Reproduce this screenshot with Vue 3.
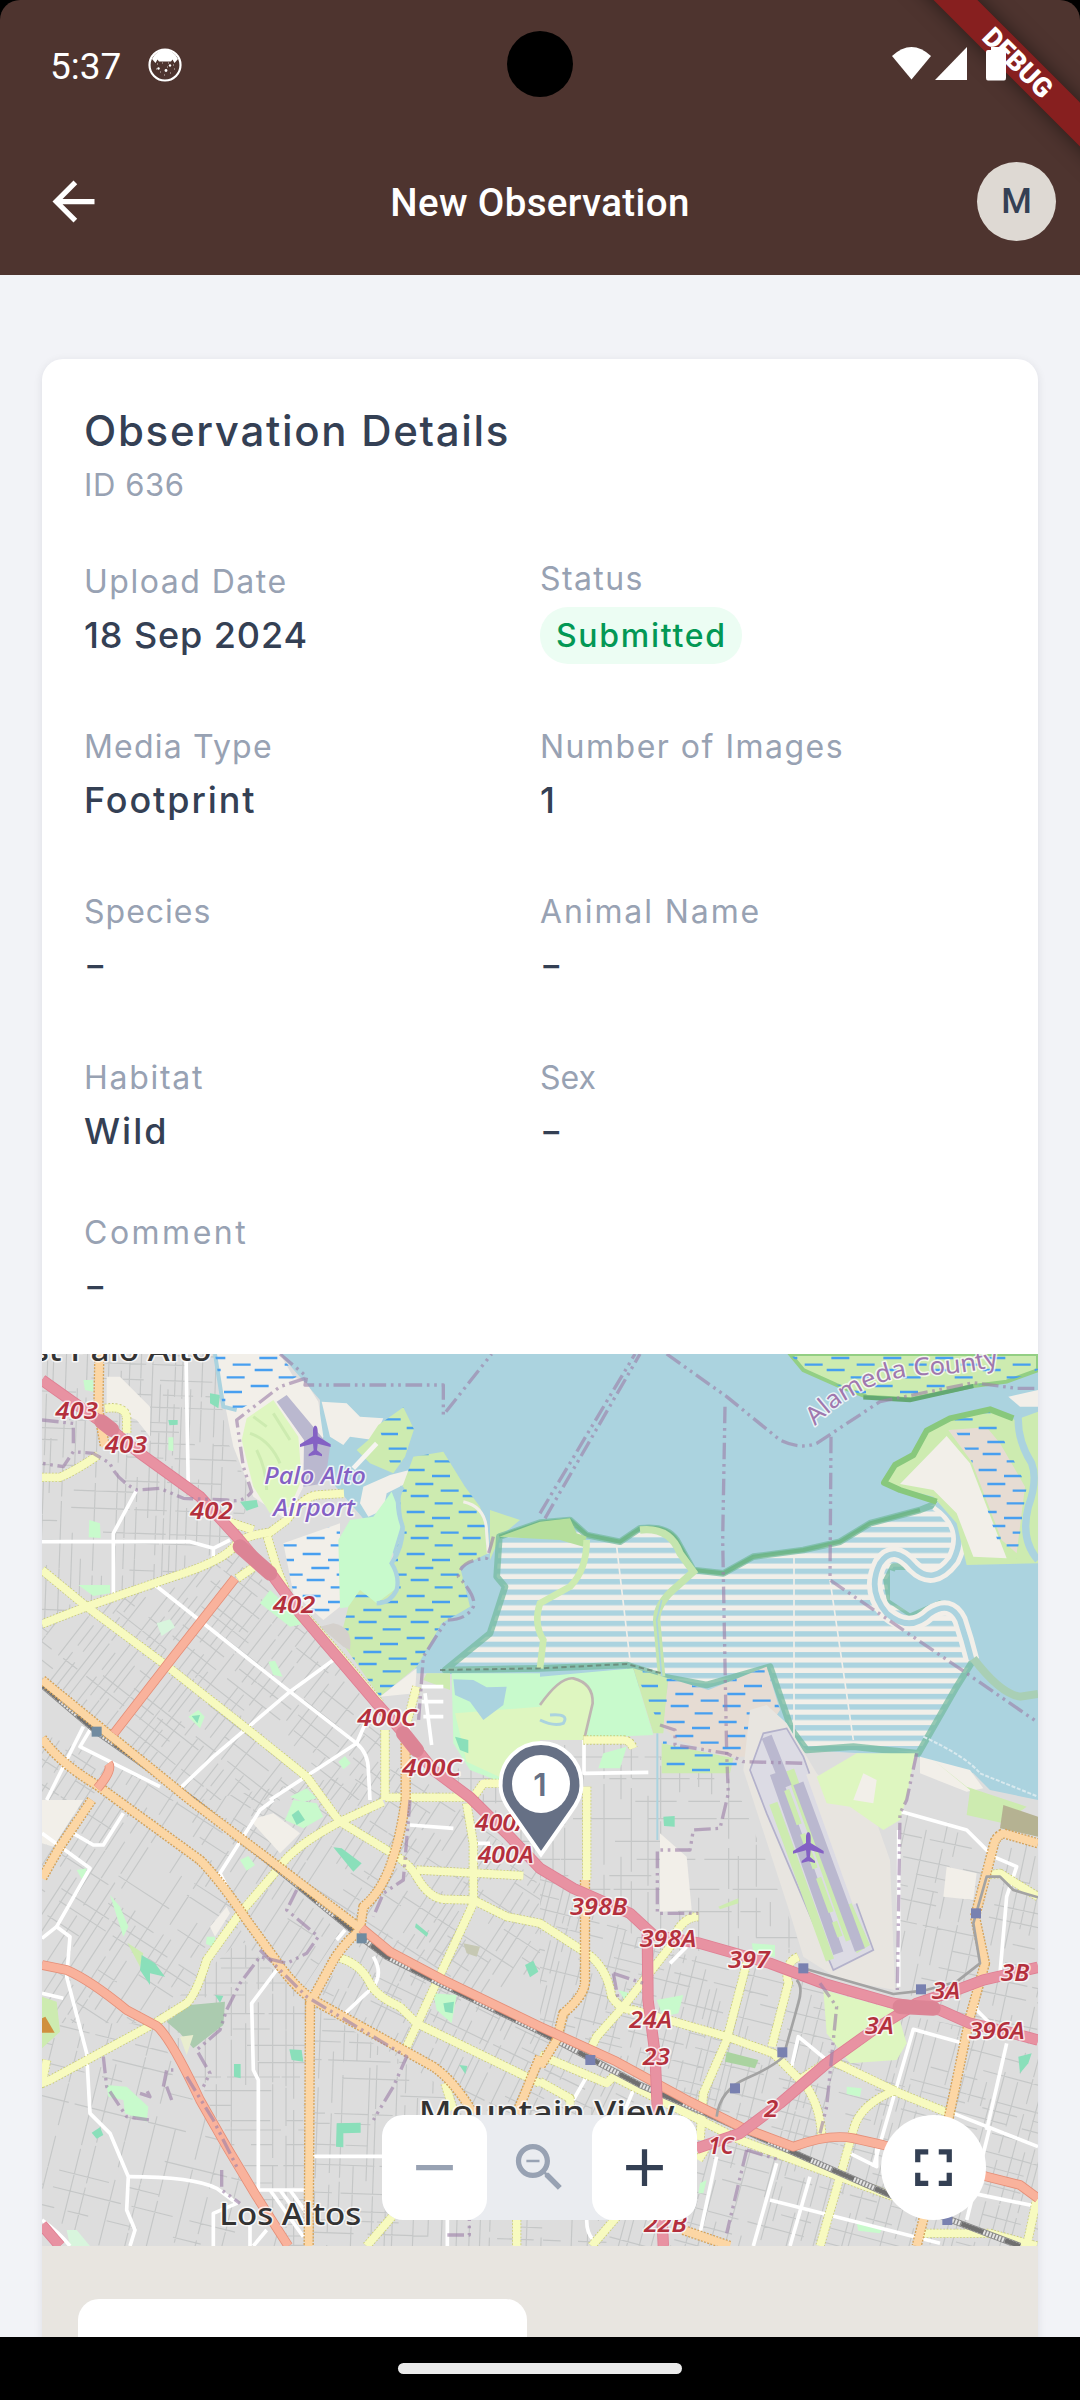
<script setup>
const cells = [
  { label: 'Upload Date', value: '18 Sep 2024', ls: 1.5, vs: 0.9 },
  { label: 'Status', value: 'Submitted', pill: true, ls: 1.4, vs: 1.7 },
  { label: 'Media Type', value: 'Footprint', ls: 1.2, vs: 1.9 },
  { label: 'Number of Images', value: '1', ls: 1.5, vs: 0 },
  { label: 'Species', value: '-', ls: 1, vs: 0 },
  { label: 'Animal Name', value: '-', ls: 1.9, vs: 0 },
  { label: 'Habitat', value: 'Wild', ls: 1.7, vs: 2 },
  { label: 'Sex', value: '-', ls: 0, vs: 0 },
]

// Deterministic street texture: short segments of a rotated grid.
function streets(seed, cx, cy, r, pitch) {
  let s = seed
  const rnd = () => ((s = (s * 16807) % 2147483647) / 2147483647)
  let d = ''
  for (let a = -r; a < r; a += pitch * (0.6 + rnd() * 0.8)) {
    for (let b = -r; b < r;) {
      const len = 60 + rnd() * 220
      if (rnd() > 0.22) d += `M${(cx + a).toFixed(0)} ${(cy + b).toFixed(0)}v${len.toFixed(0)}`
      b += len + rnd() * 40
    }
  }
  for (let a = -r; a < r; a += pitch * (0.8 + rnd() * 1.0)) {
    for (let b = -r; b < r;) {
      const len = 50 + rnd() * 160
      if (rnd() > 0.35) d += `M${(cx + b).toFixed(0)} ${(cy + a).toFixed(0)}h${len.toFixed(0)}`
      b += len + rnd() * 60
    }
  }
  return d
}
const districts = [
  { id: 'd1', clip: '6,42 525,42 560,300 640,470 560,620 380,710 6,860', angle: 2, d: streets(11, 300, 420, 520, 30) },
  { id: 'd2', clip: '6,860 380,710 600,640 760,830 1030,1100 1050,1380 480,1380 6,1020', angle: 38, d: streets(23, 520, 1000, 750, 30) },
  { id: 'd3', clip: '6,1180 480,1380 900,1780 780,1960 600,1800 330,2050 6,2050', angle: 33, d: streets(37, 400, 1650, 700, 36) },
  { id: 'd4', clip: '6,2050 330,2050 640,2560 740,2718 6,2718', angle: 14, d: streets(41, 300, 2400, 560, 60) },
  { id: 'd5', clip: '330,2050 600,1800 810,1990 810,2718 740,2718 500,2280', angle: 0, d: streets(59, 600, 2250, 560, 34) },
  { id: 'd6', clip: '810,1990 1300,2300 1700,2300 1700,2718 810,2718', angle: 2, d: streets(61, 1250, 2350, 560, 36) },
  { id: 'd7', clip: '480,1380 1100,1280 1500,1600 1500,2070 970,1780', angle: 33, d: streets(73, 1050, 1600, 700, 30) },
  { id: 'd8', clip: '820,1980 970,1790 1500,2070 1850,2250 1700,2330 1320,2320', angle: 26, d: streets(79, 1250, 2080, 620, 28) },
  { id: 'd9', clip: '1200,1300 1650,1180 2080,1320 2290,1840 1850,1830 1500,1600', angle: 0, d: streets(83, 1750, 1500, 640, 44) },
  { id: 'd10', clip: '1500,1600 1850,1830 2300,1900 2580,2000 2400,2160 2080,2380 1500,2070', angle: 14, d: streets(97, 2050, 2000, 720, 30) },
  { id: 'd11', clip: '2060,2400 2560,2020 2720,2050 2994,2110 2994,2718 1700,2718 1700,2330', angle: 15, d: streets(101, 2400, 2420, 900, 32) },
  { id: 'd12', clip: '2580,1420 2994,1500 2994,2100 2750,2020 2570,1950', angle: 12, d: streets(113, 2790, 1750, 480, 46) },
]

const parks = [
  ['#c8facc', '130,120 160,120 160,155 135,150'], ['#8adfba', '510,160 540,165 535,205 510,190'],
  ['#8adfba', '385,240 413,240 413,254 388,256'], ['#c8facc', '385,292 400,292 400,334 385,330'],
  ['#c8facc', '148,540 180,550 182,594 146,592'], ['#8adfba', '600,485 650,480 655,500 620,512'],
  ['#c8facc', '115,735 210,735 210,760 160,768'], ['#c8facc', '660,790 690,750 800,850 750,860'],
  ['#d8f5dd', '350,850 390,838 405,862 365,888'], ['#c8facc', '685,965 705,962 728,1010 700,1005'],
  ['#c8facc', '445,1130 475,1110 494,1130 480,1165'], ['#8adfba', '455,1128 480,1125 472,1150'],
  ['#c8facc', '895,1265 915,1248 932,1270 910,1288'], ['#c8facc', '750,1370 800,1345 830,1375 790,1385'],
  ['#c8facc', '735,1440 760,1380 830,1390 850,1430 790,1465'], ['#8adfba', '755,1425 775,1410 795,1440 770,1455'],
  ['#c8facc', '600,1560 625,1548 645,1575 620,1592'], ['#8adfba', '880,1522 905,1525 965,1570 940,1595'],
  ['#c8facc', '110,1590 140,1585 130,1625'], ['#c8facc', '210,1665 240,1700 265,1760 250,1790'],
  ['#cdebb0', '262,1808 310,1840 300,1880'], ['#8adfba', '305,1845 345,1870 375,1910 330,1900 330,1935 300,1890'],
  ['#c8facc', '500,1790 525,1790 525,1822 498,1812'], ['#8adfba', '525,1965 550,1968 540,1988'],
  ['#8adfba', '748,2128 785,2130 790,2165 755,2160'], ['#8adfba', '582,2172 602,2172 602,2215 582,2210'],
  ['#c8facc', '200,2235 260,2240 325,2300 320,2345 255,2320 250,2280 205,2270'],
  ['#8adfba', '155,2378 180,2362 190,2385 170,2396'], ['#c8facc', '1180,1960 1250,1965 1235,2050 1190,2010'],
  ['#8adfba', '1210,1990 1242,1985 1238,2020 1215,2015'], ['#8adfba', '1455,1875 1480,1862 1495,1895 1470,1912'],
  ['#8adfba', '1258,2175 1282,2178 1276,2202'], ['#8adfba', '890,2350 962,2348 962,2378 910,2380 910,2422 888,2420'],
  ['#8adfba', '1128,1750 1165,1780 1160,1790 1125,1762'], ['#c6c8b3', '1270,1810 1320,1820 1310,1850 1280,1840'],
  ['#8adfba', '1870,1430 1904,1428 1904,1460 1872,1458'], ['#c8facc', '1690,1240 1760,1220 1740,1285 1675,1285'],
  ['#c8facc', '2135,1810 2205,1815 2205,1852 2140,1835'], ['#c8facc', '1850,1980 1930,1965 1915,2020 1870,2030'],
  ['#c8facc', '1735,1950 1770,1960 1760,1990'], ['#aad3a0', '2060,2135 2155,2160 2145,2185 2055,2165'],
  ['#c8facc', '2420,2240 2465,2245 2460,2270 2420,2262'], ['#c8facc', '2450,2650 2530,2660 2520,2680 2455,2672'],
  ['#8adfba', '2935,2150 2975,2140 2965,2170 2940,2200'], ['#cdebb0', '2035,1700 2095,1675 2095,1690 2040,1708'],
  ['#c8facc', '1980,2530 2000,2520 1990,2560 1975,2560'], ['#d8f5dd', '80,2670 110,2670 150,2718 90,2718'],
  ['#c6c8b3', '2480,1600 2515,1590 2540,1620 2500,1660 2490,1625'], ['#f2efe9', '2720,1580 2810,1600 2800,1680 2710,1670'],
  ['#f2efe9', '6,1380 130,1380 40,1520 6,1510'], ['#f2efe9', '630,1440 700,1420 780,1480 720,1540'],
  ['#f2efe9', '1860,1480 1940,1550 1955,1710 1860,1715'], ['#f2efe9', '200,110 240,110 330,200 330,290 290,240 200,200'],
  ['#f2efe9', '510,1760 560,1700 570,1720 525,1790'],
]

const primary = [
  'M178 42L175 210L195 320', 'M6 1195Q60 1270 170 1335L480 1560Q540 1620 620 1740L700 1850Q760 1940 820 1980L1180 2180Q1240 2220 1300 2320',
  'M155 1380L60 1520L6 1615', 'M1097 1190V1380Q1080 1500 1050 1580Q1020 1660 970 1700L960 1770Q900 1820 870 1880L810 1990L806 2718',
  'M6 1020L190 1170L450 1380L960 1765', 'M1500 2150L1430 2320',
  'M1635 1620V1930Q1630 1970 1570 2020L1550 2100L1500 2180', 'M2994 1510L2890 1480Q2865 1490 2860 1520L2805 1730L2835 1870L2790 2030L2725 2340L2630 2718', 'M1930 2670L2070 2718',
]
const secondary = [
  'M6 852L140 800L400 710Q560 660 590 610Q620 585 690 577L740 540Q790 470 830 465L912 460', 'M682 590L712 690L745 770L885 930L1020 1090',
  'M6 690L140 800L370 970L600 1150L800 1310L880 1420L900 1445L1040 1530Q1110 1570 1130 1610Q1170 1680 1220 1678L1300 1680L1400 1730L1500 1750L1640 1840Q1700 1880 1715 1970Q1740 2010 1780 2010L2060 2090L2200 2140L2300 2240Q2345 2310 2345 2400',
  'M195 205Q262 195 260 240V280', 'M6 412H60Q110 390 175 345', 'M592 715L640 682', 'M1035 1170V1380', 'M550 540L640 570', 'M1036 1372L1300 1372L1330 1330H1380',
  'M20 2160L6 2230L30 2220L340 2052L440 1990Q470 1960 500 1860L600 1720L720 1580Q760 1520 900 1445L1030 1385',
  'M1280 1390L1300 1510V1690L1100 2120', 'M1130 1590L1450 1607', 'M900 1855Q960 1870 990 1930Q1010 1970 1080 2000L1130 2050L1500 2230',
  'M1640 1340V1620', 'M1630 1200H1750Q1770 1200 1780 1225', 'M1975 1730Q1920 1730 1890 1820L1750 2000L1670 2090L1650 2130',
  'M2120 1870L2060 2100L1990 2260L1980 2400', 'M2275 1850Q2230 1870 2245 1930L2195 2120', 'M2270 2225L2370 2160L2580 2260L2740 2325',
  'M2570 2250Q2460 2290 2440 2370L2400 2510L2340 2718', 'M1500 2145L1700 2230L1720 2210L1920 2310L2100 2400L2560 2570', 'M1500 2225L1590 2275V2300', 'M2840 1605L2880 1600L2994 1670',
  'M1655 2718L1735 2625', 'M980 2718L1065 2620', 'M1430 2640V2718', 'M2640 2680H2850L2990 2718', 'M2994 2560L2960 2718', 'M1100 1150L1130 1040', 'M1215 2230L1240 2310', 'M2000 2420L1975 2460',
]
const tertiary = [
  'M438 42L445 450', 'M290 450L220 580V760', 'M6 605H450L520 625L570 600M520 625V650', 'M345 735L750 1055L950 1210Q985 1240 985 1290L990 1380',
  'M420 1345L520 1250L750 1055L880 960', 'M690 1380L950 1210L985 1130', 'M130 1160L20 1380', 'M150 1170L120 1220L360 1340',
  'M6 1480L150 1585L50 1760L90 1790L80 1910L140 2140L150 2320L210 2380L265 2510L260 2610L285 2670L270 2718', 'M265 2510Q460 2510 530 2545L590 2590L520 2620V2718',
  'M710 1890L635 1990L640 2190L655 2220V2550H800', 'M820 2449H1030', 'M250 1420L190 1515H160L100 1480', 'M700 1380L660 1410L540 1600L560 1640', 'M915 1770L890 1800', 'M1000 1850Q1030 1900 1000 1940L915 2020',
  'M1632 1200V1300L1825 1297', 'M1110 1455L1240 1465', 'M1300 1510H1350', 'M1145 1040H1210M1145 1085H1210M1150 1130H1210M1155 1060L1175 1215', 'M1100 1150Q1110 1200 1150 1235',
  'M2585 1415L2780 1470Q2830 1520 2860 1550L2930 1580L2900 1670L2880 1900', 'M2500 2480L2620 2068L2770 2110', 'M2740 2320L2994 2420', 'M2850 2360L2780 2640', 'M2140 2718L2210 2470', 'M1980 2680L2030 2450',
  'M2250 2718L2310 2510', 'M2190 2580L2700 2710', 'M2250 2200L2275 2090L2360 2160', 'M2900 2110L2840 2370', 'M2430 2440L2510 2480V2400', 'M1890 1870L1940 1820', 'M1600 2280L1640 2210', 'M1640 2640Q1640 2680 1660 2700',
  'M1222 2640V2718', 'M630 2718V2640', 'M640 2718L680 2670', 'M6 1960L70 1975', 'M6 1795L50 1760', 'M6 2640Q60 2680 90 2718', 'M2800 2560L2994 2600', 'M2810 1930V2010L2870 2070',
  'M1755 2310L1780 2250', 'M690 2550L790 2690M720 2550L800 2660M750 2550L800 2620', 'M2576 1470V1940',
]
const motorway = [
  'M6 120L190 250L300 340L480 470L590 590L640 650L700 710L780 820L1010 1090L1100 1190L1180 1290L1290 1372L1400 1480L1500 1585L1600 1645L1770 1720L1840 1785L1980 1810L2190 1870L2350 1930L2560 1990L2700 2010L2790 2050L2900 2075L2994 2100',
  'M1970 2425L2100 2380L2220 2290L2360 2170L2500 2070L2630 1990L2750 1950L2830 1920L2994 1882', 'M1822 1780L1824 1980L1845 2140L1855 2380L1870 2718', 'M6 2655L60 2718',
]
const trunk = [
  'M585 715L400 950L222 1180', 'M205 1270Q220 1290 172 1345', 'M6 1875L80 1890Q150 1920 260 2010L350 2058Q390 2090 480 2280L560 2420L650 2570L745 2718',
  'M965 1765L1050 1835L1200 1915L1500 2060L1730 2165L1950 2285L2100 2360L2260 2420Q2370 2380 2440 2395L2530 2415L2840 2510L2940 2535L2994 2575',
]
const rail = ['M6 1035L170 1175L460 1380L960 1790L1040 1850L1200 1930L1500 2075L1800 2235L2020 2330L2300 2455L2550 2565L2720 2635L2940 2718']
const tram = ['M2290 1885L2560 1962L2650 1952L2750 1925L2820 1870L2800 1750L2840 1610L2880 1610L2920 1650L2994 1672', 'M2270 1920Q2290 1940 2275 1990L2230 2150Q2200 2180 2120 2215Q2040 2250 2030 2330']
const borders = [
  'M720 42L800 110L795 135H1210V225L1355 42', 'M1515 535L1800 42', 'M1500 520L1785 42', 'M1880 42L2060 170L2220 300Q2280 330 2330 310L2520 185L2800 128L2930 145H2994',
  'M2055 200L2048 600L2060 1240L2065 1360L2040 1465L1960 1470L1950 1530H1852V1720H1975', 'M2373 290L2370 720L2780 1000L2990 1145', 'M2630 1240L2600 1380L2580 1420L2572 1950',
  'M795 115L720 140L590 240L610 380L635 455Q610 490 560 480L430 475L360 445L290 450Q230 420 210 370L160 340L100 335L70 380L6 370',
  'M1860 1155L1905 1170V1215L2060 1240L2110 1265L2300 1270', 'M1110 1380L1090 1620L1030 1660L1000 1730', 'M770 1650L740 1710L800 1760L835 1790L800 1840L740 1870L660 1850L600 1930L560 2010L540 2070L470 2130L510 2200L490 2240',
  'M660 1830L800 1970L1100 2150L1060 2240L1000 2340', 'M190 2150L200 2240L260 2330L330 2340', 'M440 2210L520 2340L590 2480', 'M370 2240L380 2190H400M380 2240L395 2280M300 2260L330 2270L320 2250', 'M545 2490V2550L600 2590', 'M1720 1900L1810 1930M1720 1900L1735 1980', 'M2340 1930L2390 2000L2360 2300L2340 2380', 'M2120 2430L2060 2680', 'M6 240L100 250V310', 'M2120 2430L2220 2460', 'M1222 2685H1288V2640',
  'M1360 590Q1350 630 1340 655Q1260 660 1255 710Q1310 770 1300 800Q1280 840 1220 840L1150 950L1135 1150',
]
const stations = [[170, 1175, '#718ba0'], [965, 1795, '#718ba0'], [1651, 2160], [2290, 1885], [2227, 2137], [2085, 2245], [2643, 1948], [2808, 1720], [2722, 2640]]
const exits = [
  ['403', 46, 236, 128], ['403', 194, 338, 128], ['402', 450, 537, 128], ['402', 698, 818, 128], ['400C', 952, 1158, 178], ['400C', 1086, 1308, 178],
  ['400A', 1305, 1474, 168], ['400A', 1313, 1568, 168], ['398B', 1590, 1726, 172], ['398A', 1799, 1820, 170], ['397', 2064, 1885, 126], ['24A', 1768, 2064, 128],
  ['23', 1808, 2175, 82], ['2', 2173, 2330, 42], ['1C', 2005, 2442, 76], ['22B', 1812, 2676, 128], ['3A', 2675, 1978, 86], ['3A', 2475, 2083, 86], ['3B', 2882, 1923, 86], ['396A', 2786, 2096, 168],
]
const plane = 'M0-46C5-46 7-38 7-30V-14L46 10V18L7 8L5 28L20 40V46L0 41L-20 46V40L-5 28L-7 8L-46 18V10L-7-14V-30C-7-38-5-46 0-46Z'
</script>

<template>
  <div class="screen">
    <header class="top">
      <div class="status-bar">
        <span class="clock">5:37</span>
        <svg class="face" viewBox="0 0 34 34"><circle cx="17" cy="17" r="15.500" fill="none" stroke="#fff" stroke-width="2.200" /><path d="M4 11Q9 1.500 17 1.500Q25 1.500 30 11L26.500 15L24.500 11.500L23 13.500L11 13.500L9.500 11.500L7.500 15Z" fill="#fff" /><path d="M9 16h1M14 15h1M20 15h1M25 17h1M8 21h1M12 24h1M22 25h1M26 21h1M16 27h1M19 19h1" stroke="#c9bcb9" stroke-width="1" /><circle cx="10.500" cy="20.500" r="1.200" fill="#fff" /><circle cx="22" cy="17.500" r="1.200" fill="#fff" /><circle cx="18" cy="22.500" r="1.400" fill="#fff" /></svg>
        <span class="camera"></span>
        <svg class="signals" viewBox="0 0 120 36"><path d="M0 10Q19.500-8 39 10L19.500 33.500Z" fill="#fff" /><path d="M43 34L75 1V34Z" fill="#fff" /><path d="M99 1H109V4H112Q114 4 114 6V32Q114 34.500 112 34.500H96Q94 34.500 94 32V6Q94 4 96 4H99Z" fill="#fff" /></svg>
      </div>
      <div class="app-bar">
        <svg class="back" viewBox="0 0 24 24"><path d="M20 11H7.830l5.590-5.590L12 4l-8 8 8 8 1.410-1.410L7.830 13H20v-2z" fill="#fff" /></svg>
        <h1>New Observation</h1>
        <span class="avatar">M</span>
      </div>
      <div class="banner">DEBUG</div>
    </header>

    <main>
      <section class="card">
        <div class="details">
          <h2>Observation Details</h2>
          <p class="id">ID 636</p>
          <div class="grid">
            <div v-for="c in cells" :key="c.label" class="cell" :class="{ status: c.pill }">
              <span class="label" :style="{ letterSpacing: c.ls + 'px' }">{{ c.label }}</span>
              <span :class="c.pill ? 'pill' : c.value === '-' ? 'value dash' : 'value'" :style="{ letterSpacing: c.vs + 'px' }">{{ c.value }}</span>
            </div>
          </div>
          <div class="cell comment">
            <span class="label">Comment</span>
            <span class="value dash">-</span>
          </div>
        </div>

        <div class="map">
          <svg class="tiles" viewBox="6 42 2988 2676" preserveAspectRatio="none">
            <defs>
              <pattern id="marsh" width="156" height="126" patternUnits="userSpaceOnUse"><path d="M8 12h54M84 30h54M34 54h54M110 74h46M0 74h8M20 90h54M92 112h54" stroke="#479ff0" stroke-width="7" /></pattern>
              <pattern id="pond" width="100" height="31.300" patternUnits="userSpaceOnUse" y="592"><rect width="100" height="31.300" fill="#f2efe9" /><rect width="100" height="16" fill="#abd3df" /></pattern>
              <clipPath v-for="d in districts" :id="d.id" :key="d.id"><polygon :points="d.clip" /></clipPath>
              <path id="county" d="M2325 258C2420 160 2530 112 2640 106C2730 102 2800 98 2910 66" />
            </defs>
            <rect x="6" y="42" width="2988" height="2676" fill="#dddddd" />
            <g v-for="d in districts" :key="d.id" :clip-path="`url(#${d.id})`">
              <path :d="d.d" :transform="`rotate(${d.angle} ${d.clip.split(' ')[1].replace(',', ' ')})`" stroke="#c5c7c7" stroke-width="3.500" fill="none" />
            </g>
            <polygon v-for="(p, i) in parks" :key="i" :fill="p[0]" :points="p[1]" />

            <!-- bay and shoreline -->
            <path d="M720 42H2994V1380L2850 1350L2800 1300L2630 1250L2300 1230L2100 1050L1900 1050L1200 1000L1130 1000L1070 760L1060 640L870 420L840 300V180Z" fill="#abd3df" />
            <path d="M525 42H720L760 110L800 130L835 185L850 290L790 440L740 540L640 470L580 320Z" fill="#f2efe9" />
            <path d="M525 42L550 200L590 210" stroke="#abd3df" stroke-width="12" fill="none" />
            <path d="M525 42H720L770 110L700 150L580 220L550 210Z" fill="url(#marsh)" />
            <path d="M845 185L920 190L960 230L1030 235L1000 300L930 290L910 315L870 290Z" fill="#f2efe9" />
            <path d="M700 180L620 235L605 300L640 440L690 520L750 500L785 420L775 290Z" fill="#def6c0" />
            <path d="M640 230l40 30M630 280q60 20 90 90M650 330q30 60 30 120M700 220l50 80" stroke="#cdebb0" stroke-width="9" fill="none" />
            <path d="M710 185L740 165L870 320L855 430L790 440L792 300Z" fill="#bab8cf" />
            <path d="M730 610L900 550V800L850 840L760 760Z" fill="#f2efe9" />
            <path d="M730 610L900 550V800L850 840L760 760Z" fill="url(#marsh)" />
            <path d="M970 440L1050 405L1108 390L1100 430L1040 460L1030 510L985 530L960 490Z" fill="#f2efe9" />
            <path d="M930 540L1000 530L1055 455L1088 540L1050 665L1075 730L1040 785L900 805L895 600Z" fill="#c8facc" />
            <path d="M1015 255L1090 202L1122 268L1095 350L1060 400L990 370L950 330L985 300Z" fill="#cdebb0" />
            <path d="M1015 255L1090 202L1122 268L1095 350L1060 400Z" fill="url(#marsh)" />
            <path d="M1120 350L1210 335L1275 440L1320 500L1345 580V640L1260 680L1290 800L1205 850L1130 980L1020 1070L900 900L925 800L960 750L1010 790L1075 740L1060 660L1088 570L1080 460Z" fill="#cdebb0" />
            <path d="M1120 350L1210 335L1275 440L1320 500L1345 580V640L1260 680L1290 800L1205 850L1130 980L1020 1070L900 900L925 800L960 750L1010 790L1075 740L1060 660L1088 570L1080 460Z" fill="url(#marsh)" />
            <path d="M1088 440Q1060 480 1088 560Q1090 620 1055 670Q1080 710 1070 750Q1050 790 1010 790" stroke="#abd3df" stroke-width="13" fill="none" />
            <path d="M1270 485Q1340 500 1340 580L1345 640" stroke="#f2efe9" stroke-width="9" fill="none" />
            <path d="M1350 510L1440 540L1380 590L1350 660Z" fill="#cdebb0" />
            <path d="M880 850Q940 860 930 930L910 920L840 860Z" fill="#d4d0cc" />
            <path d="M1020 1070L1130 985L1125 1060Z" fill="#f2efe9" />
            <path d="M1010 310L940 385" stroke="#f6f4f0" stroke-width="14" />

            <!-- salt ponds -->
            <path d="M1378 590L1500 548L1590 540L1640 585L1740 605L1800 565Q1880 555 1910 600L1960 690L2050 700L2140 650L2290 630L2400 605L2490 550L2640 510L2690 490Q2760 530 2760 620Q2740 700 2670 710L2620 680L2560 680L2540 720L2550 780L2610 820L2700 785L2780 830L2800 960L2750 1040L2635 1240L2440 1220L2300 1230L2255 1170L2190 980L2000 1035L1870 1010L1760 975L1500 985L1215 990L1350 880L1395 740L1370 710Z" fill="url(#pond)" stroke="#76bba0" stroke-opacity=".75" stroke-width="20" stroke-linejoin="round" />
            <path d="M1378 590L1500 548L1590 540L1640 585L1740 605L1800 565Q1880 555 1910 600L1960 690L2050 700L2140 650L2290 630L2400 605L2490 550L2640 510" stroke="#64b078" stroke-opacity=".65" stroke-width="12" fill="none" />
            <path d="M1378 590L1500 545L1590 535L1610 580L1640 590L1630 620L1560 600Z" fill="#b5df9c" />
            <path d="M1640 600Q1640 690 1590 740L1500 790Q1480 850 1510 900L1500 985" stroke="#cdebb0" stroke-width="20" fill="none" />
            <path d="M1800 570Q1890 560 1920 640L1960 695L1910 740Q1850 790 1850 840L1865 1010" stroke="#c4e5ae" stroke-width="22" fill="none" />
            <path d="M1865 780L1850 840L1865 1010" stroke="#abd3df" stroke-width="5" fill="none" />
            <path d="M1730 620L1770 960M2262 650V1200M2370 720L2440 1200" stroke="#f2efe9" stroke-width="5" fill="none" />
            <path d="M2550 690L2650 725L2790 680L2994 670V1060L2920 1050L2800 950L2770 820L2700 780L2610 820L2550 780Z" fill="#abd3df" />
            <g fill="none" stroke-linejoin="round">
              <path d="M2690 490Q2790 560 2740 660Q2680 740 2620 680Q2560 610 2520 670Q2480 750 2540 820Q2610 880 2670 820Q2730 780 2760 840Q2780 900 2795 960" stroke="#f2efe9" stroke-width="46" />
              <path d="M2690 490Q2790 560 2740 660Q2680 740 2620 680Q2560 610 2520 670Q2480 750 2540 820Q2610 880 2670 820Q2730 780 2760 840Q2780 900 2795 960" stroke="#abd3df" stroke-width="17" />
            </g>
            <path d="M2800 955Q2880 1060 2940 1070L2994 1062" stroke="#a9cfb5" stroke-width="24" fill="none" />
            <path d="M2650 1190Q2780 1250 2820 1300L2994 1370" stroke="#d8e9ee" stroke-width="6" stroke-dasharray="12 5" fill="none" />

            <!-- eastern islands -->
            <path d="M2250 42L2290 90L2390 135L2480 170L2610 178L2800 138L2900 125L2994 90V42Z" fill="#cdebb0" stroke="#93cf84" stroke-width="12" />
            <path d="M2250 42L2290 90L2390 135L2480 170L2610 178L2800 138L2900 125L2994 90V42Z" fill="url(#marsh)" />
            <path d="M2470 172L2610 180L2800 138" stroke="#63a873" stroke-width="13" fill="none" />
            <path d="M2580 445L2532 428L2565 375L2620 345L2660 272L2730 235L2850 210L2925 240L2994 215V670L2780 675L2750 550L2680 470Z" fill="#cdebb0" />
            <path d="M2580 432L2720 288L2790 370L2900 655L2800 650L2750 520L2680 450Z" fill="#f2efe9" />
            <path d="M2725 270L2840 262L2880 310L2955 440L2930 640L2885 600L2795 365Z" fill="#e6dcd3" />
            <path d="M2730 240L2850 215L2960 440L2930 655L2885 640L2795 365Z" fill="url(#marsh)" />
            <path d="M2935 220Q2930 300 2975 370Q2994 420 2965 500Q2940 600 2994 660" stroke="#abd3df" stroke-width="22" fill="none" />
            <path d="M2905 170L2994 150V200H2940Z" fill="#f2efe9" />
            <path d="M2690 485L2580 450L2532 428L2565 375L2620 345L2660 272L2730 235L2850 208L2920 235" stroke="#88c87c" stroke-width="18" stroke-linejoin="round" fill="none" />

            <!-- shoreline park and golf links -->
            <path d="M1235 1000H1500V1330L1380 1325L1290 1290L1240 1210Z" fill="#c8facc" />
            <path d="M1245 1120L1500 1100V1290L1380 1312L1280 1265Z" fill="#def6c0" />
            <path d="M1240 1018L1300 1020L1340 1042L1400 1040L1390 1095L1330 1140L1290 1085L1245 1065Z" fill="#abd3df" />
            <path d="M1245 1190L1285 1200V1240L1260 1230Z" fill="#8adfba" />
            <path d="M1160 1000H1230V1050L1150 1020Z" fill="#cdebb0" />
            <path d="M1500 1010L1780 985L1840 1185L1500 1200Z" fill="#c8facc" />
            <path d="M1500 1095Q1560 1010 1600 1015Q1660 1030 1658 1090L1632 1200H1500Z" fill="#def6c0" />
            <path d="M1500 1095Q1560 1010 1600 1015Q1660 1030 1658 1090L1632 1200" fill="none" stroke="#bfb5b2" stroke-width="8" />
            <path d="M1500 1140Q1540 1160 1570 1150Q1590 1120 1530 1125" stroke="#abd3df" stroke-width="9" fill="none" />
            <path d="M1780 985L1885 1015L1870 1180H1840Z" fill="#cdebb0" />
            <path d="M1885 1015L2005 1050L2180 980L2220 1110L2130 1250L2060 1250L1910 1200L1870 1160Z" fill="#e6dcd3" />
            <path d="M1865 1210L2080 1255L2070 1300H1865Z" fill="#cdebb0" />
            <path d="M1780 985L1885 1015L2005 1050L2180 980L2220 1110L2130 1250L2070 1300H1865L1870 1180Z" fill="url(#marsh)" />
            <path d="M1852 1180V1500" stroke="#abd3df" stroke-width="6" />

            <!-- airfield -->
            <path d="M2130 1110L2180 1095L2240 1150L2330 1300L2420 1390L2500 1420L2550 1560L2565 1950L2400 1920L2290 1850L2250 1720L2110 1290Z" fill="#e8e5e0" />
            <path d="M2130 1290L2170 1180L2240 1165L2290 1250L2500 1830L2380 1890L2180 1420Z" fill="#dcdbe4" stroke="#b3b1cb" stroke-width="5" />
            <path d="M2200 1390L2370 1860M2250 1290L2430 1800" stroke="#cdebb0" stroke-width="26" />
            <path d="M2405 1700L2435 1690L2490 1815L2450 1840Z" fill="#cdebb0" />
            <path d="M2180 1190L2240 1340M2205 1300L2395 1840M2275 1330L2460 1830" stroke="#bab8cf" stroke-width="32" />
            <path d="M2240 1350L2400 1790" stroke="#cdebb0" stroke-width="16" stroke-dasharray="110 30" />
            <path d="M2285 1300L2425 1690" stroke="#e8e5e0" stroke-width="24" transform="translate(25 0)" />
            <path d="M2330 1310L2450 1240H2625L2600 1370L2580 1440L2530 1470L2430 1400L2360 1390Z" fill="#def6c0" />
            <path d="M2470 1300L2510 1320L2500 1390L2440 1380Z" fill="#f2efe9" />
            <path d="M2640 1250L2790 1290L2830 1345L2780 1355L2640 1300Z" fill="#f2efe9" />
            <path d="M2680 1260L2780 1340L2960 1400L2890 1450L2780 1425L2790 1350Z" fill="#cdebb0" />
            <path d="M2890 1395L2994 1430V1490L2880 1465Z" fill="#b5b292" />
            <path d="M2350 1950L2570 2010L2600 2110L2570 2160L2430 2170L2360 2080Z" fill="#def6c0" />
            <path d="M380 2045L450 1995L555 1985L550 2055L460 2125L420 2080Z" fill="#abcbaf" />
            <path d="M420 2090L460 2085L440 2145Z" fill="#e9edcf" />
            <path d="M6 1970L50 1985L60 2075L6 2125Z" fill="#cdebb0" />
            <path d="M6 2078V2035L16 2030L44 2078Z" fill="#d0903f" />

            <!-- road network -->
            <g fill="none" stroke-linejoin="round">
              <path v-for="d in tertiary" :key="d" :d="d" stroke="#fff" stroke-width="11" />
              <path v-for="d in secondary" :key="d" :d="d" stroke="#c9cc78" stroke-width="28" stroke-dasharray="5 5" />
              <path v-for="d in secondary" :key="d" :d="d" stroke="#f7fabf" stroke-width="23" />
              <g v-for="d in rail" :key="d"><path :d="d" stroke="#8a8a8a" stroke-width="19" /><path :d="d" stroke="#e4e4e4" stroke-width="14" stroke-dasharray="6 4" /><path :d="d" stroke="#707070" stroke-width="13" stroke-dasharray="70 70" /></g>
              <path v-for="d in primary" :key="d" :d="d" stroke="#d5a35a" stroke-width="31" stroke-dasharray="6 4" />
              <path v-for="d in primary" :key="d" :d="d" stroke="#fcd6a4" stroke-width="23" />
              <g v-for="d in trunk" :key="d"><path :d="d" stroke="#e58f78" stroke-width="29" /><path :d="d" stroke="#f9b29c" stroke-width="24" /></g>
              <path v-for="d in motorway" :key="d" :d="d" stroke="#df7f93" stroke-width="34" />
              <path v-for="d in motorway" :key="d" :d="d" stroke="#e892a2" stroke-width="29" />
              <path d="M600 620L645 660L690 700M2580 2000L2680 2005M1090 1180L1130 1230M185 245L215 268" stroke="#dc8495" stroke-width="44" stroke-linecap="round" />
              <path v-for="d in tram" :key="d" :d="d" stroke="#a3a3a3" stroke-width="8" />
              <path v-for="d in borders" :key="d" :d="d" stroke="#9c7fa8" stroke-opacity=".62" stroke-width="10" stroke-dasharray="50 14 8 14 8 14" />
              <path d="M1200 990L1500 985L1760 972L1865 1000" stroke="#63796a" stroke-opacity=".7" stroke-width="6" stroke-dasharray="16 10" />
            </g>
            <rect v-for="s in stations" :key="s.join()" :x="s[0] - 15" :y="s[1] - 15" width="30" height="30" :fill="s[2] || '#7981b0'" />

            <path :d="plane" transform="translate(826 303)" fill="#8461c4" />
            <path :d="plane" transform="translate(2305 1523)" fill="#8461c4" />
            <g class="halo airport"><text x="672" y="433" textLength="306" lengthAdjust="spacingAndGlyphs">Palo Alto</text><text x="700" y="527" textLength="245" lengthAdjust="spacingAndGlyphs">Airport</text></g>
            <text class="halo county"><textPath href="#county" textLength="598" lengthAdjust="spacingAndGlyphs">Alameda County</textPath></text>
            <g class="halo exit"><text v-for="(e, i) in exits" :key="i" :x="e[1]" :y="e[2]" :textLength="e[3]" lengthAdjust="spacingAndGlyphs">{{ e[0] }}</text></g>
            <g class="halo town"><text x="515" y="63" text-anchor="end" textLength="650" lengthAdjust="spacingAndGlyphs">East Palo Alto</text><text x="538" y="2655" textLength="426" lengthAdjust="spacingAndGlyphs">Los Altos</text><text x="1136" y="2350" textLength="768" lengthAdjust="spacingAndGlyphs">Mountain View</text></g>

            <path d="M1503 1543L1414 1416Q1378 1368 1382 1330A121 121 0 0 1 1624 1330Q1628 1368 1592 1416Z" fill="#667085" stroke="#fff" stroke-width="12" />
            <circle cx="1503" cy="1332" r="87" fill="#fff" />
            <text class="pin" x="1500" y="1367" text-anchor="middle">1</text>
          </svg>
          <div class="zoom">
            <span class="btn"><svg viewBox="0 0 24 24"><path d="M5 11h14v2H5z" fill="#98a2b3" /></svg></span>
            <span class="mid"><svg viewBox="0 0 24 24"><path d="M15.500 14h-.79l-.28-.27C15.410 12.590 16 11.110 16 9.500 16 5.910 13.090 3 9.500 3S3 5.910 3 9.500 5.910 16 9.500 16c1.610 0 3.090-.59 4.230-1.570l.27.28v.79l5 4.990L20.490 19l-4.990-5zm-6 0C7.010 14 5 11.990 5 9.500S7.010 5 9.500 5 14 7.010 14 9.500 11.990 14 9.500 14zM7 9h5v1H7z" fill="#98a2b3" /></svg></span>
            <span class="btn"><svg viewBox="0 0 24 24"><path d="M19 13h-6v6h-2v-6H5v-2h6V5h2v6h6v2z" fill="#344054" /></svg></span>
          </div>
          <span class="full"><svg viewBox="0 0 24 24"><path d="M7 14H5v5h5v-2H7v-3zm-2-4h2V7h3V5H5v5zm12 7h-3v2h5v-5h-2v3zM14 5v2h3v3h2V5h-5z" fill="#344054" /></svg></span>
        </div>
        <div class="media"><div class="thumb"></div></div>
      </section>
    </main>
    <footer><span></span></footer>
  </div>
</template>

<style>
body { margin: 0; background: #000; }
</style>

<style scoped>
.screen { width: 1080px; height: 2400px; display: flex; flex-direction: column; overflow: hidden; background: #000; font-family: Inter, "Noto Sans", sans-serif; color: #344054; }
.top { position: relative; height: 275px; flex: none; background: #4e342f; border-radius: 20px 20px 0 0; overflow: hidden; font-family: Roboto, sans-serif; color: #fff; }
.status-bar { height: 128px; display: flex; align-items: center; padding-left: 50px; position: relative; }
.clock { font-size: 37px; line-height: 44px; margin-top: 5px; }
.face { width: 34px; height: 34px; margin-left: 27px; margin-top: 2px; }
.camera { position: absolute; left: 507px; top: 31px; width: 66px; height: 66px; border-radius: 50%; background: #000; }
.signals { position: absolute; z-index: 3; left: 892px; top: 46px; width: 120px; height: 36px; }
.app-bar { height: 147px; display: grid; grid-template-columns: 100px 1fr 100px; align-items: center; padding: 0 24px 0 24px; }
.back { width: 63px; height: 63px; margin-left: 18px; }
h1 { margin: 2px 0 0; text-align: center; font-size: 38.500px; font-weight: 500; line-height: 44px; letter-spacing: .35px; }
.avatar { justify-self: end; width: 79px; height: 79px; border-radius: 50%; background: #ded9d3; color: #344054; display: flex; align-items: center; justify-content: center; font-size: 35px; font-weight: 500; }
.banner { position: absolute; z-index: 2; left: 868px; top: 47px; width: 300px; height: 31px; line-height: 32px; text-align: center; background: #871f1f; transform: rotate(45deg); font-size: 27px; font-weight: 900; box-shadow: 0 0 20px rgba(0, 0, 0, .5); }
main { height: 2062px; flex: none; box-sizing: border-box; padding: 84px 42px 0; overflow: hidden; background: #f2f3f7; }
.card { height: 2100px; border-radius: 21px; background: #fff; box-shadow: 0 2px 10px rgba(16, 24, 40, .09); }
.details { height: 995px; box-sizing: border-box; padding: 42px 42px 0; }
h2 { margin: 0; font-size: 42px; font-weight: 500; line-height: 60px; letter-spacing: 1.7px; }
.id { margin: 0; font-size: 31px; line-height: 47px; letter-spacing: .6px; color: #98a2b3; }
.grid { display: grid; grid-template-columns: 456px 456px; grid-auto-rows: 106px; row-gap: 59.400px; margin-top: 48.500px; }
.cell { display: flex; flex-direction: column; align-items: flex-start; }
.label { font-size: 32px; line-height: 50px; letter-spacing: 2.5px; color: #98a2b3; }
.value { font-size: 36px; font-weight: 500; line-height: 56px; }
.dash { transform: scaleX(1.35); transform-origin: left; }
.status { margin-top: -3px; }
.pill { margin-top: 3px; height: 57px; line-height: 57px; padding: 0 15px 0 16px; border-radius: 28px; background: #ecfdf3; color: #039855; font-size: 32px; font-weight: 500; }
.comment { margin-top: 49px; }
.map { position: relative; height: 892px; overflow: hidden; }
.tiles { display: block; width: 996px; height: 892px; }
.halo { paint-order: stroke; stroke: #fff; stroke-opacity: .75; stroke-width: 9px; stroke-linejoin: round; font-family: "Noto Sans", sans-serif; }
.airport { fill: #8461c4; font-size: 72px; font-style: italic; font-weight: 500; }
.county { fill: #a078ae; font-size: 74px; }
.exit { fill: #b4303d; font-size: 68px; font-style: italic; font-weight: 600; }
.town { fill: #333; font-size: 90px; font-weight: 500; }
.pin { font: 600 95px Inter, sans-serif; fill: #667085; }
.zoom { position: absolute; left: 340px; top: 761px; display: flex; border-radius: 21px; background: #eaecf0; overflow: hidden; }
.btn, .mid, .full { width: 105px; height: 105px; display: flex; align-items: center; justify-content: center; }
.btn { background: #fff; border-radius: 21px; }
.zoom svg, .full svg { width: 63px; height: 63px; }
.full { position: absolute; left: 839px; top: 761px; border-radius: 50%; background: #fff; }
.media { height: 213px; box-sizing: border-box; padding: 53px 36px 0; background: #e8e5e0; }
.thumb { width: 449px; height: 200px; border-radius: 21px; background: #fff; }
footer { height: 63px; display: flex; align-items: center; justify-content: center; background: #000; }
footer span { width: 284px; height: 11px; border-radius: 6px; background: #ebebeb; }
</style>
